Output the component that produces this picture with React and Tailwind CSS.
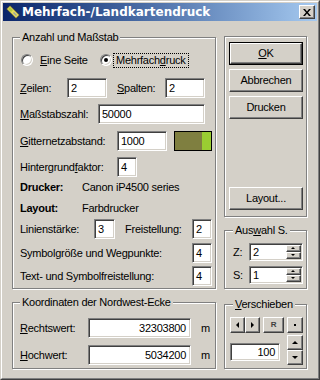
import React from "react";

const etched = "border border-[#808080] shadow-[1px_1px_0_#fff,inset_1px_1px_0_#fff]";

function Legend({ children, className = "" }) {
  return (
    <div className={`-mt-[7px] px-[2px] w-fit h-[13px] leading-[13px] bg-[#D4D0C8] ${className}`}>
      {children}
    </div>
  );
}

function Edit({ value, className = "", right }) {
  return (
    <div
      className={`bg-white border border-t-[#808080] border-l-[#808080] border-r-white border-b-white shadow-[inset_1px_1px_0_#404040,inset_-1px_-1px_0_#D4D0C8] flex items-center px-[3px] shrink-0 ${
        right ? "justify-end pr-[4px]" : ""
      } ${className}`}
    >
      {value}
    </div>
  );
}

function Btn({ children, className = "" }) {
  return (
    <div
      className={`bg-[#D4D0C8] border border-t-white border-l-white border-r-[#404040] border-b-[#404040] shadow-[inset_-1px_-1px_0_#808080] flex items-center justify-center shrink-0 ${className}`}
    >
      {children}
    </div>
  );
}

function Radio({ checked }) {
  return (
    <div className="w-[12px] h-[12px] rounded-full bg-white border border-t-[#808080] border-l-[#808080] border-r-white border-b-white shadow-[inset_1px_1px_0_#404040,inset_-1px_-1px_0_#D4D0C8] flex items-center justify-center shrink-0">
      {checked && <div className="w-[4px] h-[4px] rounded-full bg-black" />}
    </div>
  );
}

// small triangle for spin / arrow buttons
function Tri({ dir, size = 3 }) {
  const s = size;
  const pts = {
    up: `0,${s} ${s},0 ${2 * s},${s}`,
    down: `0,0 ${2 * s},0 ${s},${s}`,
    left: `${s},0 ${s},${2 * s} 0,${s}`,
    right: `0,0 0,${2 * s} ${s},${s}`,
  }[dir];
  const horiz = dir === "up" || dir === "down";
  return (
    <svg width={horiz ? 2 * s + 1 : s + 1} height={horiz ? s + 1 : 2 * s + 1} className="block">
      <polygon points={pts} fill="#000" />
    </svg>
  );
}

function Spin({ value }) {
  return (
    <div className="w-[54px] h-[18px] bg-white border border-t-[#808080] border-l-[#808080] border-r-white border-b-white shadow-[inset_1px_1px_0_#404040,inset_-1px_-1px_0_#D4D0C8] p-px flex">
      <div className="flex-1 flex items-center pl-[2px]">{value}</div>
      <div className="w-[15px] flex flex-col">
        <Btn className="h-[7px]">
          <Tri dir="up" size={2} />
        </Btn>
        <Btn className="h-[7px]">
          <Tri dir="down" size={2} />
        </Btn>
      </div>
    </div>
  );
}

function TitleBar() {
  return (
    <div className="h-[18px] flex items-center bg-linear-to-r from-[#0A246A] to-[#A6CAF0] px-[2px] shrink-0 tracking-normal">
      <svg width="16" height="16" viewBox="0 0 16 16" className="shrink-0">
        <polygon points="1,5 5,1 15,11 11,15" fill="#404040" />
        <polygon points="2,5 5,2 14,11 11,14" fill="#E6DC5A" />
        <polygon points="3,5 5,3 8,6 6,8" fill="#B4C83C" />
        <polygon points="8,9 9,8 12,11 11,12" fill="#9AA0A0" />
      </svg>
      <span className="ml-[1px] text-white font-bold text-[12px] leading-[14px] font-['DejaVu_Sans',sans-serif]">
        Mehrfach-/Landkartendruck
      </span>
      <Btn className="ml-auto w-[16px] h-[14px]">
        <svg width="8" height="7" viewBox="0 0 8 7">
          <path d="M0 0h2l2 2.5L6 0h2L5 3.5 8 7H6L4 4.5 2 7H0l3-3.5z" fill="#000" />
        </svg>
      </Btn>
    </div>
  );
}

function LeftColumn() {
  return (
    <div className="w-[204px] mt-[16px] flex flex-col shrink-0">
      <div className={`h-[252px] ${etched} flex flex-col pl-[7px]`}>
        <Legend>Anzahl und Maßstab</Legend>

        <div className="mt-[6px] h-[20px] flex items-center">
          <div className="w-[80px] flex items-center pl-[1px]">
            <Radio />
            <span className="ml-[7px]">
              <u>E</u>ine Seite
            </span>
          </div>
          <Radio checked />
          <span className="ml-[1px] h-[15px] px-[2px] border border-dotted border-black flex items-center">
            Mehrfach<u>d</u>ruck
          </span>
        </div>

        <div className="mt-[8px] h-[20px] flex items-center">
          <span className="w-[47px]">
            <u>Z</u>eilen:
          </span>
          <Edit value="2" className="w-[40px] h-[20px]" />
          <span className="ml-[10px] w-[48px]">
            <u>S</u>palten:
          </span>
          <Edit value="2" className="w-[40px] h-[20px]" />
        </div>

        <div className="mt-[6px] h-[20px] flex items-center">
          <span className="w-[78px]">
            <u>M</u>aßstabszahl:
          </span>
          <Edit value="50000" className="w-[107px] h-[20px]" />
        </div>

        <div className="mt-[7px] h-[20px] flex items-center">
          <span className="w-[97px]">
            <u>G</u>itternetzabstand:
          </span>
          <Edit value="1000" className="w-[50px] h-[20px]" />
          <div className="ml-[7px] w-[38px] h-[20px] border border-black bg-[#7F7F40] flex justify-end">
            <div className="w-[9px] bg-[#9ACD32]" />
          </div>
        </div>

        <div className="mt-[6px] h-[20px] flex items-center">
          <span className="w-[97px]">
            Hintergrund<u>f</u>aktor:
          </span>
          <Edit value="4" className="w-[20px] h-[20px]" />
        </div>

        <div className="mt-[3px] h-[14px] flex items-center">
          <span className="w-[62px] font-bold">Drucker:</span>
          <span>Canon iP4500 series</span>
        </div>

        <div className="mt-[7px] h-[14px] flex items-center">
          <span className="w-[62px] font-bold">Layout:</span>
          <span>Farbdrucker</span>
        </div>

        <div className="mt-[4px] h-[20px] flex items-center">
          <span className="w-[74px]">Linienstärke:</span>
          <Edit value="3" className="w-[21px] h-[20px]" />
          <span className="ml-[10px] w-[67px]">Freistellung:</span>
          <Edit value="2" className="w-[20px] h-[20px]" />
        </div>

        <div className="mt-[4px] h-[20px] flex items-center">
          <span className="w-[172px]">Symbolgröße und Wegpunkte:</span>
          <Edit value="4" className="w-[20px] h-[20px]" />
        </div>

        <div className="mt-[3px] h-[20px] flex items-center">
          <span className="w-[172px]">Text- und Symbolfreistellung:</span>
          <Edit value="4" className="w-[20px] h-[20px]" />
        </div>
      </div>

      <div className={`mt-[13px] h-[67px] ${etched} flex flex-col pl-[7px]`}>
        <Legend>Koordinaten der Nordwest-Ecke</Legend>

        <div className="mt-[9px] h-[20px] flex items-center">
          <span className="w-[68px]">
            <u>R</u>echtswert:
          </span>
          <Edit value="32303800" right className="w-[103px] h-[20px]" />
          <span className="ml-[10px]">m</span>
        </div>

        <div className="mt-[7px] h-[20px] flex items-center">
          <span className="w-[68px]">
            <u>H</u>ochwert:
          </span>
          <Edit value="5034200" right className="w-[103px] h-[20px]" />
          <span className="ml-[10px]">m</span>
        </div>
      </div>
    </div>
  );
}

function RightColumn() {
  return (
    <div className="ml-[8px] w-[83px] mt-[15px] flex flex-col shrink-0">
      <div className={`h-[181px] ${etched} flex flex-col pl-[4px]`}>
        <div className="mt-[5px] w-[74px] h-[23px] border border-black flex">
          <Btn className="flex-1">
            <span>
              <u>O</u>K
            </span>
          </Btn>
        </div>
        <Btn className="mt-[4px] w-[74px] h-[23px]">Abbrechen</Btn>
        <Btn className="mt-[4px] w-[74px] h-[23px]">Drucken</Btn>
        <Btn className="mt-auto mb-[6px] w-[74px] h-[23px]">Layout...</Btn>
      </div>

      <div className={`mt-[13px] h-[59px] ${etched} flex flex-col pl-[8px]`}>
        <Legend>
          Aus<u>w</u>ahl S.
        </Legend>
        <div className="mt-[6px] h-[18px] flex items-center">
          <span className="w-[16px]">Z:</span>
          <Spin value="2" />
        </div>
        <div className="mt-[5px] h-[18px] flex items-center">
          <span className="w-[16px]">S:</span>
          <Spin value="1" />
        </div>
      </div>

      <div className={`mt-[15px] h-[65px] ${etched} flex flex-col pl-[5px]`}>
        <Legend className="ml-[3px]">
          <u>V</u>erschieben
        </Legend>
        <div className="mt-[6px] flex">
          <div className="w-[57px] flex flex-col">
            <div className="h-[16px] flex">
              <Btn className="w-[15px] h-[16px]">
                <Tri dir="left" size={3} />
              </Btn>
              <Btn className="w-[15px] h-[16px]">
                <Tri dir="right" size={3} />
              </Btn>
              <Btn className="ml-[3px] w-[21px] h-[16px]">
                <span className="text-[8px] leading-[8px] font-bold text-[#404040]">R</span>
              </Btn>
            </div>
            <Edit value="100" right className="mt-[10px] w-[50px] h-[18px]" />
          </div>
          <div className="w-[16px] flex flex-col">
            <Btn className="h-[16px]">
              <div className="w-[2px] h-[2px] bg-black" />
            </Btn>
            <Btn className="mt-[2px] h-[15px]">
              <Tri dir="up" size={3} />
            </Btn>
            <Btn className="h-[15px]">
              <Tri dir="down" size={3} />
            </Btn>
          </div>
        </div>
      </div>
    </div>
  );
}

export default function App() {
  return (
    <div className="w-[320px] h-[380px] bg-[#D4D0C8] font-['Liberation_Sans',Arial,sans-serif] text-[11px] leading-[13px] tracking-[-0.25px] text-black border border-t-[#D4D0C8] border-l-[#D4D0C8] border-r-[#404040] border-b-[#404040] select-none">
      <div className="h-full border border-t-white border-l-white border-r-[#808080] border-b-[#808080] p-px flex flex-col">
        <TitleBar />
        <div className="flex-1 flex pl-[9px]">
          <LeftColumn />
          <RightColumn />
        </div>
      </div>
    </div>
  );
}
